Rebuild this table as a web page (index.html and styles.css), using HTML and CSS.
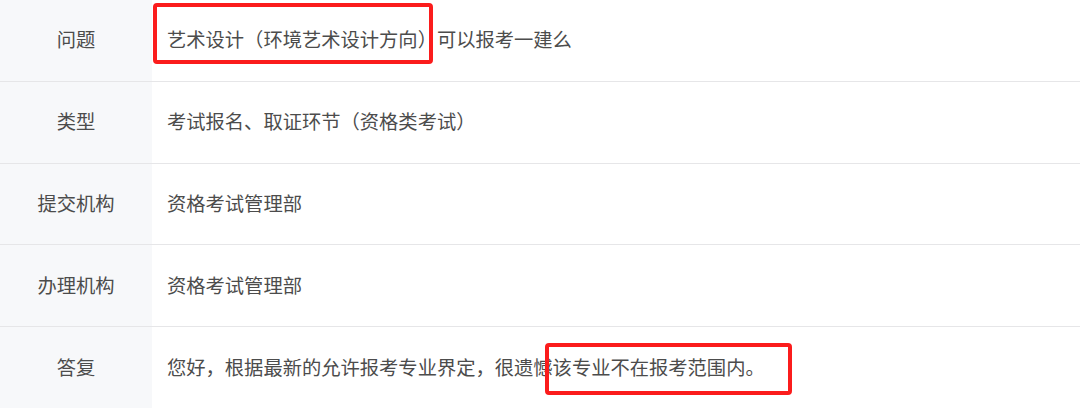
FILE: index.html
```html
<!DOCTYPE html>
<html lang="zh-CN">
<head>
<meta charset="utf-8">
<link rel="stylesheet" href="styles.css">
</head>
<body>
<div class="table">
  <div class="row">
    <div class="label">问题</div>
    <div class="value"><span class="mark mark-q"></span>艺术设计（环境艺术设计方向）可以报考一建么</div>
  </div>
  <div class="row">
    <div class="label">类型</div>
    <div class="value">考试报名、取证环节（资格类考试）</div>
  </div>
  <div class="row">
    <div class="label">提交机构</div>
    <div class="value">资格考试管理部</div>
  </div>
  <div class="row">
    <div class="label">办理机构</div>
    <div class="value">资格考试管理部</div>
  </div>
  <div class="row last">
    <div class="label">答复</div>
    <div class="value"><span class="mark mark-a"></span>您好，根据最新的允许报考专业界定，很遗憾该专业不在报考范围内。</div>
  </div>
</div>
</body>
</html>
```

FILE: styles.css
```css
html, body {
  margin: 0;
  padding: 0;
  background: #ffffff;
}
body {
  width: 1080px;
  height: 408px;
  overflow: hidden;
  font-family: "Noto Sans CJK SC", "Noto Sans", sans-serif;
  font-size: 19.3px;
  color: #4c4c4c;
}
.table {
  display: flex;
  flex-direction: column;
  height: 408px;
}
.row {
  flex: 1 1 0;
  display: flex;
  border-bottom: 1px solid #e6e6e8;
  box-sizing: border-box;
}
.row.last {
  border-bottom: none;
}
.label {
  width: 152px;
  flex: none;
  background: #f7f8fa;
  display: flex;
  align-items: center;
  justify-content: center;
  padding-bottom: 2px;
  box-sizing: border-box;
}
.value {
  position: relative;
  flex: 1;
  display: flex;
  align-items: center;
  padding-left: 15px;
  padding-bottom: 2px;
}
.mark {
  position: absolute;
  border: 4px solid #fb1c1c;
  border-radius: 4px;
  box-sizing: border-box;
}
.mark-q {
  left: 1px;
  top: 3px;
  width: 280px;
  height: 61px;
}
.mark-a {
  left: 393px;
  top: 16px;
  width: 247px;
  height: 52px;
}
```
